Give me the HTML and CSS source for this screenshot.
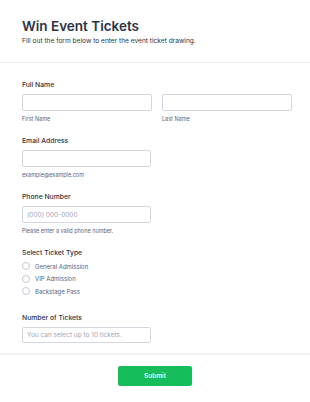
FILE: index.html
```html
<!DOCTYPE html>
<html lang="en">
<head>
    <meta charset="UTF-8">
    <meta name="viewport" content="width=device-width, initial-scale=1.0">
    <title>Win Event Tickets</title>
    <link rel="stylesheet" href="styles.css">
</head>
<body>
    <header class="form-header">
        <h1>Win Event Tickets</h1>
        <p>Fill out the form below to enter the event ticket drawing.</p>
    </header>

    <form class="form-body">
        <div class="field">
            <label class="field-label">Full Name</label>
            <div class="name-row">
                <div class="name-col">
                    <input type="text">
                    <span class="sublabel">First Name</span>
                </div>
                <div class="name-col">
                    <input type="text">
                    <span class="sublabel">Last Name</span>
                </div>
            </div>
        </div>

        <div class="field">
            <label class="field-label">Email Address</label>
            <input type="text" class="half">
            <span class="sublabel">example@example.com</span>
        </div>

        <div class="field">
            <label class="field-label">Phone Number</label>
            <input type="text" class="half" placeholder="(000) 000-0000">
            <span class="sublabel">Please enter a valid phone number.</span>
        </div>

        <div class="field">
            <label class="field-label">Select Ticket Type</label>
            <div class="radio-list">
                <div class="radio-item"><span class="radio"></span>General Admission</div>
                <div class="radio-item"><span class="radio"></span>VIP Admission</div>
                <div class="radio-item"><span class="radio"></span>Backstage Pass</div>
            </div>
        </div>

        <div class="field">
            <label class="field-label">Number of Tickets</label>
            <input type="text" class="half short" placeholder="You can select up to 10 tickets.">
        </div>
    </form>

    <div class="form-footer">
        <button type="button" class="submit-btn">Submit</button>
    </div>
</body>
</html>
```

FILE: styles.css
```css
* {
    margin: 0;
    padding: 0;
    box-sizing: border-box;
    font-family: Inter, 'Liberation Sans', sans-serif;
}

body {
    background: #fff;
    color: #2c3345;
}

.form-header {
    padding: 16px 22px 16px;
    border-bottom: 1px solid #eceef3;
}

.form-header h1 {
    font-size: 13.5px;
    line-height: 20px;
    font-weight: 600;
    color: #2c3345;
}

.form-header p {
    font-size: 6.6px;
    line-height: 10px;
    color: #2c3345;
}

.form-body {
    padding: 17px 22px 10px;
    display: flex;
    flex-direction: column;
    gap: 13px;
    border-bottom: 2px solid #f3f3f6;
}

.field {
    display: flex;
    flex-direction: column;
}

.field-label {
    font-size: 6.8px;
    line-height: 10px;
    font-weight: 500;
    color: #2c3345;
    margin-bottom: 4px;
}

.name-row {
    display: flex;
    gap: 10px;
}

.name-col {
    display: flex;
    flex-direction: column;
    width: 130px;
}

input {
    height: 17px;
    width: 130px;
    border: 1px solid #d3d7e0;
    border-radius: 2px;
    padding: 0 4px;
    font-size: 6.5px;
    color: #2c3345;
    background: #fff;
}

input::placeholder {
    color: #a0a6b6;
}

.half {
    width: 129px;
}

.short {
    height: 16px;
}

.sublabel {
    font-size: 5.5px;
    line-height: 8px;
    margin-top: 4px;
    color: #57647e;
}

.radio-list {
    display: flex;
    flex-direction: column;
    margin: -2px 0 2px;
}

.radio-item {
    display: flex;
    align-items: center;
    height: 12.5px;
    font-size: 6px;
    color: #57647e;
}

.radio {
    width: 8px;
    height: 8px;
    border: 1px solid #c3c8d3;
    border-radius: 50%;
    margin-right: 5px;
}

.form-footer {
    display: flex;
    justify-content: center;
    padding: 11px 0;
}

.submit-btn {
    width: 74px;
    height: 20px;
    background: #18bd5b;
    color: #fff;
    border: none;
    border-radius: 2px;
    font-size: 6.5px;
    font-weight: 500;
}
```
